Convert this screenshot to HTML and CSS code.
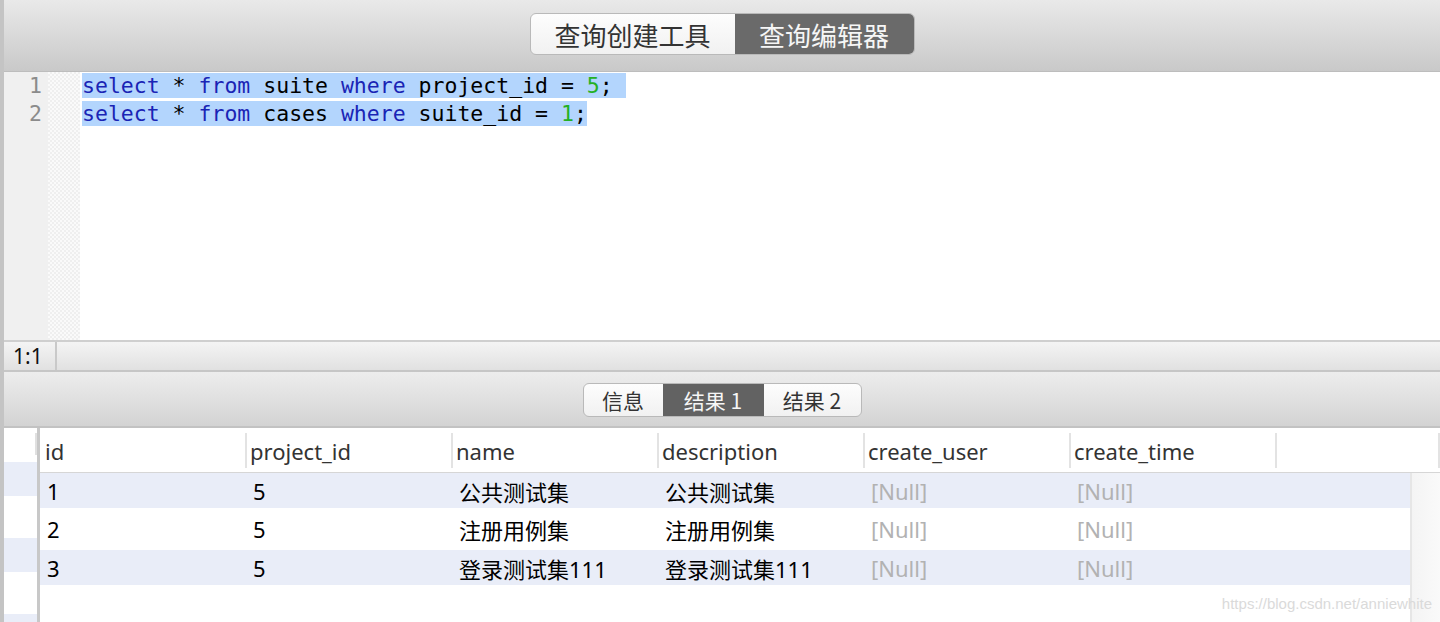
FILE: index.html
```html
<!DOCTYPE html>
<html lang="zh">
<head>
<meta charset="utf-8">
<title>查询编辑器</title>
<link rel="stylesheet" href="styles.css">
</head>
<body>
<div class="app">
  <div class="toolbar">
    <div class="seg seg-lg">
      <div class="seg-item">查询创建工具</div>
      <div class="seg-item active">查询编辑器</div>
    </div>
  </div>

  <div class="editor">
    <div class="gutter">
      <div class="ln">1</div>
      <div class="ln">2</div>
    </div>
    <div class="fold"></div>
    <div class="code">
      <div class="line"><span class="sel"><span class="kw">select</span> * <span class="kw">from</span> suite <span class="kw">where</span> project_id = <span class="num">5</span>; </span></div>
      <div class="line"><span class="sel"><span class="kw">select</span> * <span class="kw">from</span> cases <span class="kw">where</span> suite_id = <span class="num">1</span>;</span></div>
    </div>
  </div>

  <div class="status">
    <div class="pos">1:1</div>
    <div class="status-rest"></div>
  </div>

  <div class="results-bar">
    <div class="seg seg-sm">
      <div class="seg-item">信息</div>
      <div class="seg-item active">结果 1</div>
      <div class="seg-item">结果 2</div>
    </div>
  </div>

  <div class="table-area">
    <div class="rowhdr">
      <div class="rowhdr-head"><span class="rowhdr-sep"></span></div>
      <div class="rowhdr-body"></div>
    </div>
    <div class="grid">
      <div class="thead">
        <div class="th">id</div>
        <div class="th">project_id</div>
        <div class="th">name</div>
        <div class="th">description</div>
        <div class="th">create_user</div>
        <div class="th">create_time</div>
        <div class="th"></div>
      </div>
      <div class="tbody">
        <div class="rows">
          <div class="tr odd">
            <div class="td">1</div><div class="td">5</div><div class="td">公共测试集</div><div class="td">公共测试集</div><div class="td null">[Null]</div><div class="td null">[Null]</div>
          </div>
          <div class="tr even">
            <div class="td">2</div><div class="td">5</div><div class="td">注册用例集</div><div class="td">注册用例集</div><div class="td null">[Null]</div><div class="td null">[Null]</div>
          </div>
          <div class="tr odd">
            <div class="td">3</div><div class="td">5</div><div class="td">登录测试集111</div><div class="td">登录测试集111</div><div class="td null">[Null]</div><div class="td null">[Null]</div>
          </div>
        </div>
        <div class="vscroll"></div>
      </div>
    </div>
  </div>
  <div class="watermark">https://blog.csdn.net/anniewhite</div>
</div>
</body>
</html>
```

FILE: styles.css
```css
html, body {
  margin: 0;
  padding: 0;
}
body {
  width: 1440px;
  height: 622px;
  overflow: hidden;
  background: #ffffff;
  font-family: "Noto Sans", "Noto Sans CJK SC", sans-serif;
}
.app {
  position: relative;
  height: 622px;
  border-left: 4px solid #c4c4c4;
  display: flex;
  flex-direction: column;
}

/* top toolbar */
.toolbar {
  height: 72px;
  flex: none;
  box-sizing: border-box;
  border-bottom: 1px solid #bdbdbd;
  background: linear-gradient(#e9e9e9, #c9c9c9);
  display: flex;
  justify-content: center;
  align-items: flex-start;
  padding-top: 13px;
}
.seg {
  display: flex;
  border: 1px solid #b9b9b9;
  border-radius: 6px;
  overflow: hidden;
  background: linear-gradient(#fdfdfd, #f1f1f1);
  font-family: "Noto Sans CJK SC", "Noto Sans", sans-serif;
  color: #333333;
}
.seg-item {
  display: flex;
  align-items: center;
  justify-content: center;
  white-space: pre;
}
.seg-item.active {
  background: #6a6a6a;
  color: #f6f6f6;
}
.seg-lg {
  height: 40px;
  font-size: 26px;
}
.seg-lg .seg-item { width: 204px; }
.seg-lg .seg-item.active { width: 179px; }

.seg-sm {
  height: 32px;
  font-size: 21px;
}
.seg-sm .seg-item { width: 79px; }
.seg-sm .seg-item.active { width: 101px; background: #626262; }
.seg-sm .seg-item:last-child { width: 97px; }

/* editor */
.editor {
  height: 268px;
  flex: none;
  display: flex;
  font-family: "DejaVu Sans Mono", monospace;
  font-size: 21.5px;
  line-height: 28px;
}
.gutter {
  width: 44px;
  background: #f0f0f0;
  box-sizing: border-box;
  padding-right: 6px;
  text-align: right;
  color: #8b8b8b;
}
.fold {
  width: 32px;
  background-color: #f7f7f7;
  background-image: repeating-conic-gradient(#efefef 0 25%, #fafafa 0 50%);
  background-size: 4px 4px;
}
.code {
  flex: 1;
  padding-left: 2px;
  color: #000000;
}
.line {
  white-space: pre;
  height: 28px;
}
.sel {
  background: #b3d5fd;
}
.kw { color: #1a24b5; }
.num { color: #24b024; }

/* status bar */
.status {
  height: 32px;
  flex: none;
  box-sizing: border-box;
  border-top: 2px solid #cfcfcf;
  border-bottom: 2px solid #c6c6c6;
  background: linear-gradient(#f4f4f4, #e1e1e1);
  display: flex;
  font-family: "Noto Sans", sans-serif;
  font-size: 21px;
  color: #111111;
}
.pos {
  width: 53px;
  box-sizing: border-box;
  border-right: 2px solid #c9c9c9;
  padding-left: 9px;
  line-height: 28px;
}
.status-rest { flex: 1; }

/* results toolbar */
.results-bar {
  height: 56px;
  flex: none;
  box-sizing: border-box;
  border-bottom: 2px solid #c2c2c2;
  background: linear-gradient(#ededed, #d3d3d3);
  display: flex;
  justify-content: center;
  align-items: flex-start;
  padding-top: 11px;
}

/* table */
.table-area {
  flex: 1;
  display: flex;
  min-height: 0;
  font-size: 22px;
}
.rowhdr {
  width: 33px;
  flex: none;
  border-right: 3px solid #c8c8c8;
  display: flex;
  flex-direction: column;
}
.rowhdr-head {
  height: 34px;
  flex: none;
  display: flex;
  justify-content: flex-end;
  padding-top: 5px;
  box-sizing: border-box;
}
.rowhdr-sep {
  width: 2px;
  height: 22px;
  background: #e0e0e0;
}
.rowhdr-body {
  flex: 1;
  background: repeating-linear-gradient(#e9edf8 0 34px, #ffffff 34px 76px);
}
.grid {
  flex: 1;
  display: flex;
  flex-direction: column;
  min-width: 0;
}
.thead {
  height: 45px;
  flex: none;
  box-sizing: border-box;
  border-bottom: 1px solid #d6d6d6;
  display: grid;
  grid-template-columns: 207px repeat(5, 206px) 1fr;
  align-items: start;
  padding-top: 5px;
}
.th {
  height: 35px;
  box-sizing: border-box;
  border-right: 2px solid #e3e3e3;
  padding-left: 5px;
  display: flex;
  align-items: center;
  color: #333333;
  font-size: 22px;
}
.th:nth-child(n+2) { padding-left: 3px; }
.tbody {
  flex: 1;
  display: flex;
  min-height: 0;
}
.rows {
  width: 1370px;
  flex: none;
}
.tr {
  display: grid;
  grid-template-columns: 207px repeat(5, 206px);
  align-items: center;
  height: 37px;
}
.tr.odd { background: #e9edf8; height: 35px; }
.tr.even { height: 42px; }
.td {
  padding-left: 6px;
  color: #000000;
  white-space: nowrap;
  font-family: "Noto Sans", "Noto Sans CJK SC", sans-serif;
}
.td:first-child { padding-left: 7px; }
.td.null { color: #b2b2b2; }
.vscroll {
  flex: 1;
  border-left: 2px solid #e6e6e6;
  background: linear-gradient(90deg, #f4f4f4, #fafafa);
}

.watermark {
  position: absolute;
  right: 8px;
  bottom: 10px;
  font-family: "Liberation Sans", sans-serif;
  font-size: 15px;
  color: #dadada;
}
```
